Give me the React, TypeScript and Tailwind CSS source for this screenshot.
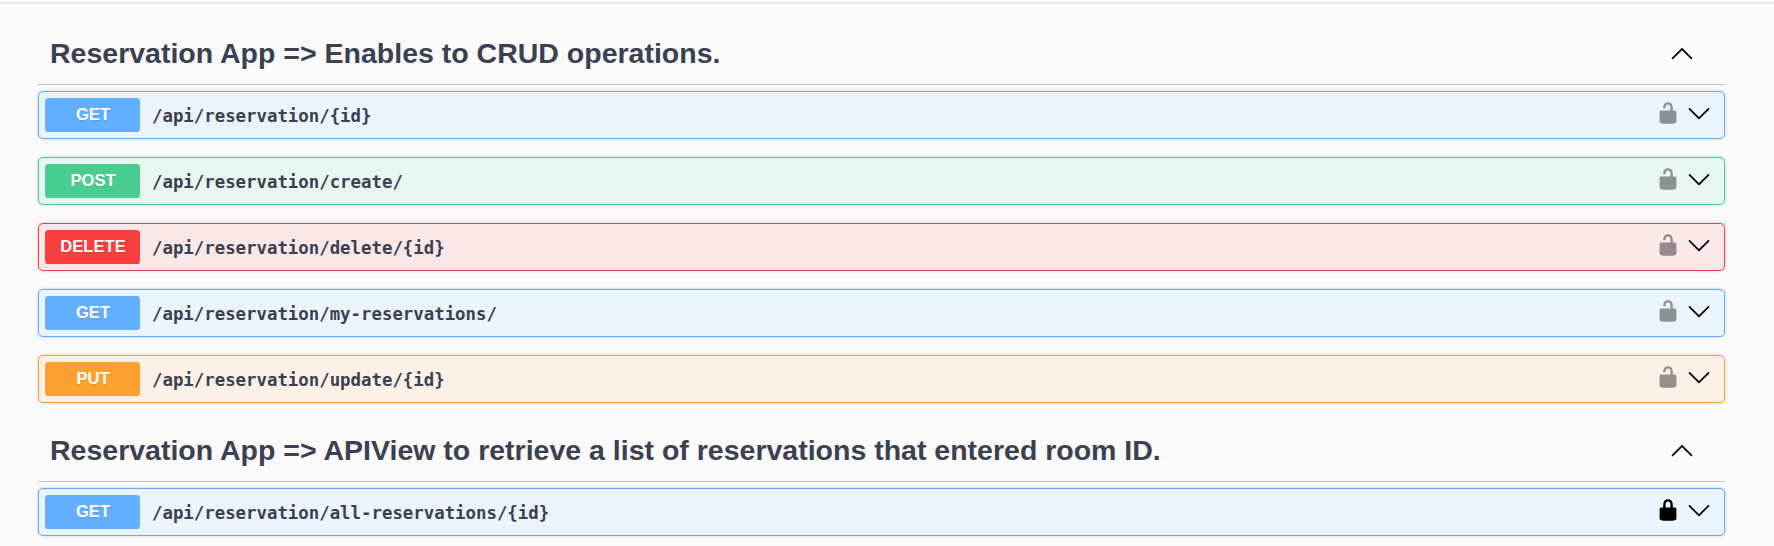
type Method = "GET" | "POST" | "DELETE" | "PUT";

interface Operation {
  method: Method;
  path: string;
  locked?: boolean;
}

interface Section {
  title: string;
  operations: Operation[];
}

const sections: Section[] = [
  {
    title: "Reservation App => Enables to CRUD operations.",
    operations: [
      { method: "GET", path: "/api/reservation/{id}" },
      { method: "POST", path: "/api/reservation/create/" },
      { method: "DELETE", path: "/api/reservation/delete/{id}" },
      { method: "GET", path: "/api/reservation/my-reservations/" },
      { method: "PUT", path: "/api/reservation/update/{id}" },
    ],
  },
  {
    title:
      "Reservation App => APIView to retrieve a list of reservations that entered room ID.",
    operations: [
      { method: "GET", path: "/api/reservation/all-reservations/{id}", locked: true },
    ],
  },
];

const rowColors: Record<Method, string> = {
  GET: "border-[#61affe] bg-[#ebf3fb]",
  POST: "border-[#49cc90] bg-[#e8f6f0]",
  DELETE: "border-[#f93e3e] bg-[#fae7e7]",
  PUT: "border-[#fca130] bg-[#fbf1e6]",
};

const badgeColors: Record<Method, string> = {
  GET: "bg-[#61affe]",
  POST: "bg-[#49cc90]",
  DELETE: "bg-[#f93e3e]",
  PUT: "bg-[#fca130]",
};

const UNLOCKED =
  "M15.8 8H14V5.6C14 2.703 12.665 1 10 1 7.334 1 6 2.703 6 5.6V6h2v-.801C8 3.754 8.797 3 10 3c1.203 0 2 .754 2 2.199V8H4c-.553 0-1 .646-1 1.199V17c0 .549.428 1.139.951 1.307l1.197.387C5.672 18.861 6.55 19 7.1 19h5.8c.549 0 1.428-.139 1.951-.307l1.196-.387c.524-.167.953-.757.953-1.306V9.199C17 8.646 16.352 8 15.8 8z";
const LOCKED =
  "M15.8 8H14V5.6C14 2.703 12.665 1 10 1 7.334 1 6 2.703 6 5.6V8H4c-.553 0-1 .646-1 1.199V17c0 .549.428 1.139.951 1.307l1.197.387C5.672 18.861 6.55 19 7.1 19h5.8c.549 0 1.428-.139 1.951-.307l1.196-.387c.524-.167.953-.757.953-1.306V9.199C17 8.646 16.352 8 15.8 8zM12 8H8V5.199C8 3.754 8.797 3 10 3c1.203 0 2 .754 2 2.199V8z";
const ARROW_DOWN =
  "M17.418 6.109c.272-.268.709-.268.979 0s.271.701 0 .969l-7.908 7.83c-.27.268-.707.268-.979 0l-7.908-7.83c-.27-.268-.27-.701 0-.969.271-.268.709-.268.979 0L10 13.25l7.418-7.141z";
const ARROW_UP =
  "M17.418 14.908c.272.268.709.268.979 0s.271-.701 0-.969l-7.908-7.83c-.27-.268-.707-.268-.979 0l-7.908 7.83c-.27.268-.27.701 0 .969.271.268.709.268.979 0L10 7.767l7.418 7.141z";

function Icon({ d, className = "" }: { d: string; className?: string }) {
  return (
    <svg viewBox="0 0 20 20" className={`size-6 shrink-0 ${className}`} aria-hidden="true">
      <path d={d} />
    </svg>
  );
}

function OperationRow({ method, path, locked }: Operation) {
  return (
    <div
      className={`flex h-12 items-center rounded-[5px] border pl-1.5 pr-[13px] shadow-[0_0_3.6px_rgba(0,0,0,0.19)] ${rowColors[method]}`}
    >
      <span
        className={`flex h-[34px] w-[95px] items-center justify-center rounded-[3.6px] pl-px text-[16.6px] font-bold text-white [text-shadow:0_1px_0_rgba(0,0,0,0.1)] ${badgeColors[method]}`}
      >
        {method}
      </span>
      <span className="ml-3 grow whitespace-nowrap pt-0.5 font-['DejaVu_Sans_Mono','Liberation_Mono',monospace] text-[17.37px] font-bold text-[#3b4151]">
        {path}
      </span>
      <div className="mb-1 flex gap-[7px]">
        <Icon d={locked ? LOCKED : UNLOCKED} className={locked ? "" : "opacity-40"} />
        <Icon d={ARROW_DOWN} />
      </div>
    </div>
  );
}

export default function App() {
  return (
    <div className="h-[546px] overflow-hidden bg-[#fafafa] font-['Liberation_Sans',Arial,sans-serif] text-[#3b4151]">
      <div className="h-0.5 bg-white shadow-[0_1px_2px_rgba(0,0,0,0.15)]" />
      <main className="ml-[38px] flex w-[1687px] flex-col gap-[18px] pt-[22px]">
        {sections.map((section) => (
          <section key={section.title}>
            <div className="mb-1.5 flex h-[61px] items-center justify-between border-b border-[rgba(59,65,81,0.3)] pl-3 pr-[31px]">
              <h3 className="pb-0.5 text-[28.5px] font-bold leading-none">{section.title}</h3>
              <Icon d={ARROW_UP} className="mb-0.5" />
            </div>
            <div className="flex flex-col gap-[18px]">
              {section.operations.map((op) => (
                <OperationRow key={op.path} {...op} />
              ))}
            </div>
          </section>
        ))}
      </main>
    </div>
  );
}
